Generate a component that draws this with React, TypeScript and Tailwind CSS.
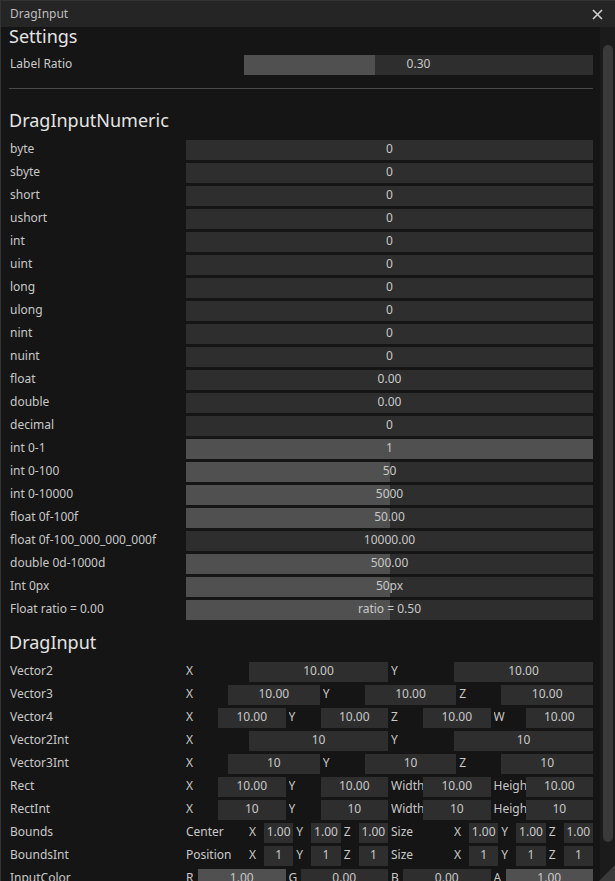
import React from 'react';

const FONT = { fontFamily: '"Noto Sans", "Open Sans", sans-serif' };

type Part = { label: string; value: string; fill?: string };

function Field({ value, fill }: { value: string; fill?: string }) {
  return (
    <div className="relative flex-1 min-w-0 h-[20px] bg-[#2e2e2e] overflow-hidden">
      {fill && <div className="absolute left-0 top-0 bottom-0 bg-[#505050]" style={{ width: fill }} />}
      <div className="relative h-full pb-[2px] flex items-center justify-center text-[12px] text-[#c8c8c8] whitespace-nowrap">
        {value}
      </div>
    </div>
  );
}

function Row({ label, children }: { label: string; children: React.ReactNode }) {
  return (
    <div className="flex items-center h-[20px] shrink-0">
      <div className="w-[177px] shrink-0 pl-[1px] pb-[2px] text-[12px] text-[#c8c8c8] whitespace-nowrap">{label}</div>
      <div className="flex-1 flex gap-[3px] h-full">{children}</div>
    </div>
  );
}

function Parts({ parts, labelW }: { parts: Part[]; labelW: string }) {
  return (
    <>
      {parts.map((p, i) => (
        <div key={i} className="flex-1 min-w-0 flex items-center">
          <div className={`${labelW} shrink-0 pb-[2px] overflow-hidden whitespace-nowrap text-[12px] text-[#c8c8c8]`}>{p.label}</div>
          <Field value={p.value} fill={p.fill} />
        </div>
      ))}
    </>
  );
}

function BoundsHalf({ label, parts }: { label: string; parts: Part[] }) {
  return (
    <div className="flex-1 min-w-0 flex items-center">
      <div className="w-[63px] shrink-0 pb-[2px] whitespace-nowrap text-[12px] text-[#c8c8c8]">{label}</div>
      <div className="flex-1 flex gap-[3px] h-full">
        <Parts parts={parts} labelW="w-[15px]" />
      </div>
    </div>
  );
}

const NUMERIC: { label: string; value: string; fill?: string }[] = [
  { label: 'byte', value: '0' },
  { label: 'sbyte', value: '0' },
  { label: 'short', value: '0' },
  { label: 'ushort', value: '0' },
  { label: 'int', value: '0' },
  { label: 'uint', value: '0' },
  { label: 'long', value: '0' },
  { label: 'ulong', value: '0' },
  { label: 'nint', value: '0' },
  { label: 'nuint', value: '0' },
  { label: 'float', value: '0.00' },
  { label: 'double', value: '0.00' },
  { label: 'decimal', value: '0' },
  { label: 'int 0-1', value: '1', fill: '100%' },
  { label: 'int 0-100', value: '50', fill: '50%' },
  { label: 'int 0-10000', value: '5000', fill: '50%' },
  { label: 'float 0f-100f', value: '50.00', fill: '50%' },
  { label: 'float 0f-100_000_000_000f', value: '10000.00' },
  { label: 'double 0d-1000d', value: '500.00', fill: '50%' },
  { label: 'Int 0px', value: '50px', fill: '50%' },
  { label: 'Float ratio = 0.00', value: 'ratio = 0.50', fill: '50%' },
];

export default function App() {
  return (
    <div style={FONT} className="relative w-[615px] h-[881px] overflow-hidden bg-[#151515] border-l border-t border-[#333333] flex flex-col">
      <div className="h-[26px] shrink-0 bg-[#252525] flex items-center justify-between pl-[9px] pr-[12px]">
        <span className="text-[12px] pb-[1px] text-[#bdbdbd]">DragInput</span>
        <svg width="11" height="11" viewBox="0 0 11 11" className="text-[#cfcfcf]">
          <path d="M1 1L10 10M10 1L1 10" stroke="currentColor" strokeWidth="1.6" />
        </svg>
      </div>
      <div className="flex-1 flex min-h-0">
        <div className="flex-1 pl-[8px] pr-[7px] flex flex-col">
          <div className="h-[20px] shrink-0 pb-[2px] flex items-center text-[18px] text-[#e4e4e4]">Settings</div>
          <div className="flex items-center h-[20px] shrink-0 mt-[8px]">
            <div className="w-[235px] shrink-0 pl-[1px] pb-[2px] text-[12px] text-[#c8c8c8]">Label Ratio</div>
            <Field value="0.30" fill="131px" />
          </div>
          <div className="h-px shrink-0 bg-[#4a4a4a] mt-[13px]" />
          <div className="h-[20px] shrink-0 mt-[22px] pb-[2px] flex items-center text-[18px] text-[#e4e4e4]">DragInputNumeric</div>
          <div className="mt-[9px] shrink-0 flex flex-col gap-[3px]">
            {NUMERIC.map((r) => (
              <Row key={r.label} label={r.label}>
                <Field value={r.value} fill={r.fill} />
              </Row>
            ))}
          </div>
          <div className="h-[20px] shrink-0 mt-[13px] pb-[2px] flex items-center text-[18px] text-[#e4e4e4]">DragInput</div>
          <div className="mt-[9px] shrink-0 flex flex-col gap-[3px]">
            <Row label="Vector2">
              <Parts labelW="w-[63px]" parts={[{ label: 'X', value: '10.00' }, { label: 'Y', value: '10.00' }]} />
            </Row>
            <Row label="Vector3">
              <Parts labelW="w-[42px]" parts={[{ label: 'X', value: '10.00' }, { label: 'Y', value: '10.00' }, { label: 'Z', value: '10.00' }]} />
            </Row>
            <Row label="Vector4">
              <Parts labelW="w-[32px]" parts={[{ label: 'X', value: '10.00' }, { label: 'Y', value: '10.00' }, { label: 'Z', value: '10.00' }, { label: 'W', value: '10.00' }]} />
            </Row>
            <Row label="Vector2Int">
              <Parts labelW="w-[63px]" parts={[{ label: 'X', value: '10' }, { label: 'Y', value: '10' }]} />
            </Row>
            <Row label="Vector3Int">
              <Parts labelW="w-[42px]" parts={[{ label: 'X', value: '10' }, { label: 'Y', value: '10' }, { label: 'Z', value: '10' }]} />
            </Row>
            <Row label="Rect">
              <Parts labelW="w-[32px]" parts={[{ label: 'X', value: '10.00' }, { label: 'Y', value: '10.00' }, { label: 'Width', value: '10.00' }, { label: 'Height', value: '10.00' }]} />
            </Row>
            <Row label="RectInt">
              <Parts labelW="w-[32px]" parts={[{ label: 'X', value: '10' }, { label: 'Y', value: '10' }, { label: 'Width', value: '10' }, { label: 'Height', value: '10' }]} />
            </Row>
            <Row label="Bounds">
              <BoundsHalf label="Center" parts={[{ label: 'X', value: '1.00' }, { label: 'Y', value: '1.00' }, { label: 'Z', value: '1.00' }]} />
              <BoundsHalf label="Size" parts={[{ label: 'X', value: '1.00' }, { label: 'Y', value: '1.00' }, { label: 'Z', value: '1.00' }]} />
            </Row>
            <Row label="BoundsInt">
              <BoundsHalf label="Position" parts={[{ label: 'X', value: '1' }, { label: 'Y', value: '1' }, { label: 'Z', value: '1' }]} />
              <BoundsHalf label="Size" parts={[{ label: 'X', value: '1' }, { label: 'Y', value: '1' }, { label: 'Z', value: '1' }]} />
            </Row>
            <Row label="InputColor">
              <Parts labelW="w-[12px]" parts={[{ label: 'R', value: '1.00', fill: '100%' }, { label: 'G', value: '0.00' }, { label: 'B', value: '0.00' }, { label: 'A', value: '1.00', fill: '100%' }]} />
            </Row>
          </div>
        </div>
        <div className="w-[15px] shrink-0 bg-[#1b1b1b] pt-[18px] pl-[3px] pr-[2px]">
          <div className="h-[797px] rounded-full bg-[#3a3a3a]" />
        </div>
      </div>
      <svg width="16" height="16" viewBox="0 0 16 16" className="absolute right-0 bottom-0">
        <path d="M16 0L16 16L0 16Z" fill="#3a3a3a" />
      </svg>
    </div>
  );
}
